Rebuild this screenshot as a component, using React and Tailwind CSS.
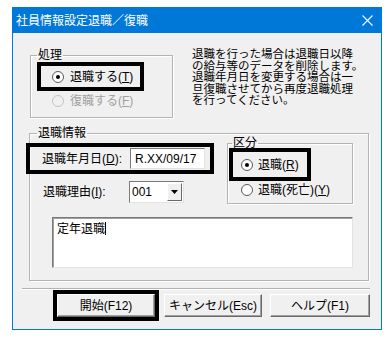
import React from "react";

const FONT = { fontFamily: '"Liberation Sans", "Noto Sans CJK JP", sans-serif' };

function Radio({ checked, disabled }) {
  return (
    <span
      className={
        disabled
          ? "inline-flex h-[12px] w-[12px] shrink-0 items-center justify-center rounded-full border border-[#c4c4c4] bg-[#f0f0f0]"
          : "inline-flex h-[12px] w-[12px] shrink-0 items-center justify-center rounded-full border border-[#5a5a5a] bg-white"
      }
    >
      {checked && <span className="h-[4px] w-[4px] rounded-full bg-black" />}
    </span>
  );
}

function Btn({ children, className }) {
  return (
    <div
      className={
        "flex h-[23px] items-center justify-center border border-t-white border-l-white border-b-[#696969] border-r-[#696969] bg-[#f0f0f0] text-[12px] leading-[14px] text-black shadow-[inset_-1px_-1px_0_#a0a0a0] " +
        (className || "")
      }
    >
      {children}
    </div>
  );
}

export default function App() {
  return (
    <div className="h-[346px] w-[390px] overflow-hidden bg-white pl-[12px] pt-[7px]" style={FONT}>
      <div className="w-[370px] border border-[#0078d7] bg-[#f0f0f0] text-black">
        {/* title bar */}
        <div className="flex h-[25px] items-center justify-between bg-[#0078d7] pl-[3px] pr-[8px] text-white">
          <span className="text-[12px] leading-[14px]">社員情報設定退職／復職</span>
          <svg width="11" height="11" viewBox="0 0 11 11" className="block">
            <path d="M0.5 0.5 L10.5 10.5 M10.5 0.5 L0.5 10.5" stroke="white" strokeWidth="1.1" fill="none" />
          </svg>
        </div>

        <div className="pt-[15px] text-[12px] leading-[14px]">
          {/* row 1 */}
          <div className="flex items-start">
            <fieldset className="ml-[17px] h-[70px] w-[143px] border border-[#b4b4b4] shadow-[inset_1px_1px_0_#fff,1px_1px_0_#fff]">
              <legend className="ml-[6px] px-[1px] leading-[14px]">処理</legend>
              <div className="ml-[6px] flex h-[29px] w-[107px] items-center gap-[6px] border-4 border-black pl-[11px]">
                <Radio checked />
                <span>
                  退職する(<span className="underline">T</span>)
                </span>
              </div>
              <div className="flex h-[20px] items-center gap-[6px] pl-[21px] text-[#a0a0a0]">
                <Radio disabled />
                <span>
                  復職する(<span className="underline">F</span>)
                </span>
              </div>
            </fieldset>
            <div className="ml-[19px] mt-[1px] w-[178px] whitespace-nowrap text-[11.5px] leading-[11.5px]">
              退職を行った場合は退職日以降
              <br />
              の給与等のデータを削除します。
              <br />
              退職年月日を変更する場合は一
              <br />
              旦復職させてから再度退職処理
              <br />
              を行ってください。
            </div>
          </div>

          {/* row 2 */}
          <fieldset className="ml-[16px] mt-[8px] h-[155px] w-[340px] border border-[#b4b4b4] shadow-[inset_1px_1px_0_#fff,1px_1px_0_#fff]">
            <legend className="ml-[7px] px-[1px] leading-[14px]">退職情報</legend>
            <div className="flex items-start">
              <div className="-ml-[4px] mt-[3px] w-[188px]">
                <div className="flex h-[31px] items-center border-4 border-black pl-[12px]">
                  <span className="w-[88px]">
                    退職年月日(<span className="underline">D</span>):
                  </span>
                  <div className="flex h-[21px] w-[75px] items-center border border-t-[#7a7a7a] border-l-[#7a7a7a] border-b-[#e3e3e3] border-r-[#e3e3e3] bg-white pl-[4px]">
                    R.XX/09/17
                  </div>
                </div>
                <div className="mt-[7px] flex items-center pl-[17px]">
                  <span className="w-[86px]">
                    退職理由(<span className="underline">I</span>):
                  </span>
                  <div className="flex h-[22px] w-[55px] items-center border border-t-[#7a7a7a] border-l-[#7a7a7a] border-b-[#e3e3e3] border-r-[#e3e3e3] bg-white">
                    <span className="flex-1 pl-[2px]">001</span>
                    <div className="mr-[1px] flex h-[18px] w-[15px] items-center justify-center border border-t-white border-l-white border-b-[#696969] border-r-[#696969] bg-[#f0f0f0]">
                      <svg width="7" height="4" viewBox="0 0 7 4">
                        <path d="M0 0 L7 0 L3.5 4 Z" fill="black" />
                      </svg>
                    </div>
                  </div>
                </div>
              </div>
              <fieldset className="-mt-[4px] ml-[13px] h-[68px] w-[126px] border border-[#b4b4b4] shadow-[inset_1px_1px_0_#fff,1px_1px_0_#fff]">
                <legend className="ml-[4px] px-[1px] leading-[14px]">区分</legend>
                <div className="-mt-[2px] ml-[1px] flex h-[33px] w-[82px] items-center gap-[5px] border-4 border-black pl-[8px]">
                  <Radio checked />
                  <span>
                    退職(<span className="underline">R</span>)
                  </span>
                </div>
                <div className="flex h-[18px] items-center gap-[5px] pl-[13px]">
                  <Radio />
                  <span>
                    退職(死亡)(<span className="underline">Y</span>)
                  </span>
                </div>
              </fieldset>
            </div>
            <div className="ml-[22px] mt-[13px] h-[51px] w-[301px] border border-t-[#7a7a7a] border-l-[#7a7a7a] border-b-[#e3e3e3] border-r-[#e3e3e3] bg-white pl-[4px] pt-[2px] shadow-[inset_1px_1px_0_#a0a0a0]">
              <span>定年退職</span>
              <span className="inline-block h-[13px] w-[1px] translate-y-[2px] bg-black" />
            </div>
          </fieldset>

          {/* separator */}
          <div className="ml-[9px] mt-[7px] h-[2px] w-[348px] border-t border-b border-t-[#b4b4b4] border-b-white" />

          {/* buttons */}
          <div className="flex items-center pb-[8px]">
            <div className="ml-[40px] h-[31px] w-[106px] border-4 border-black">
              <Btn className="w-full">開始(F12)</Btn>
            </div>
            <Btn className="ml-[5px] w-[98px]">キャンセル(Esc)</Btn>
            <Btn className="ml-[8px] w-[100px]">ヘルプ(F1)</Btn>
          </div>
        </div>
      </div>
    </div>
  );
}
